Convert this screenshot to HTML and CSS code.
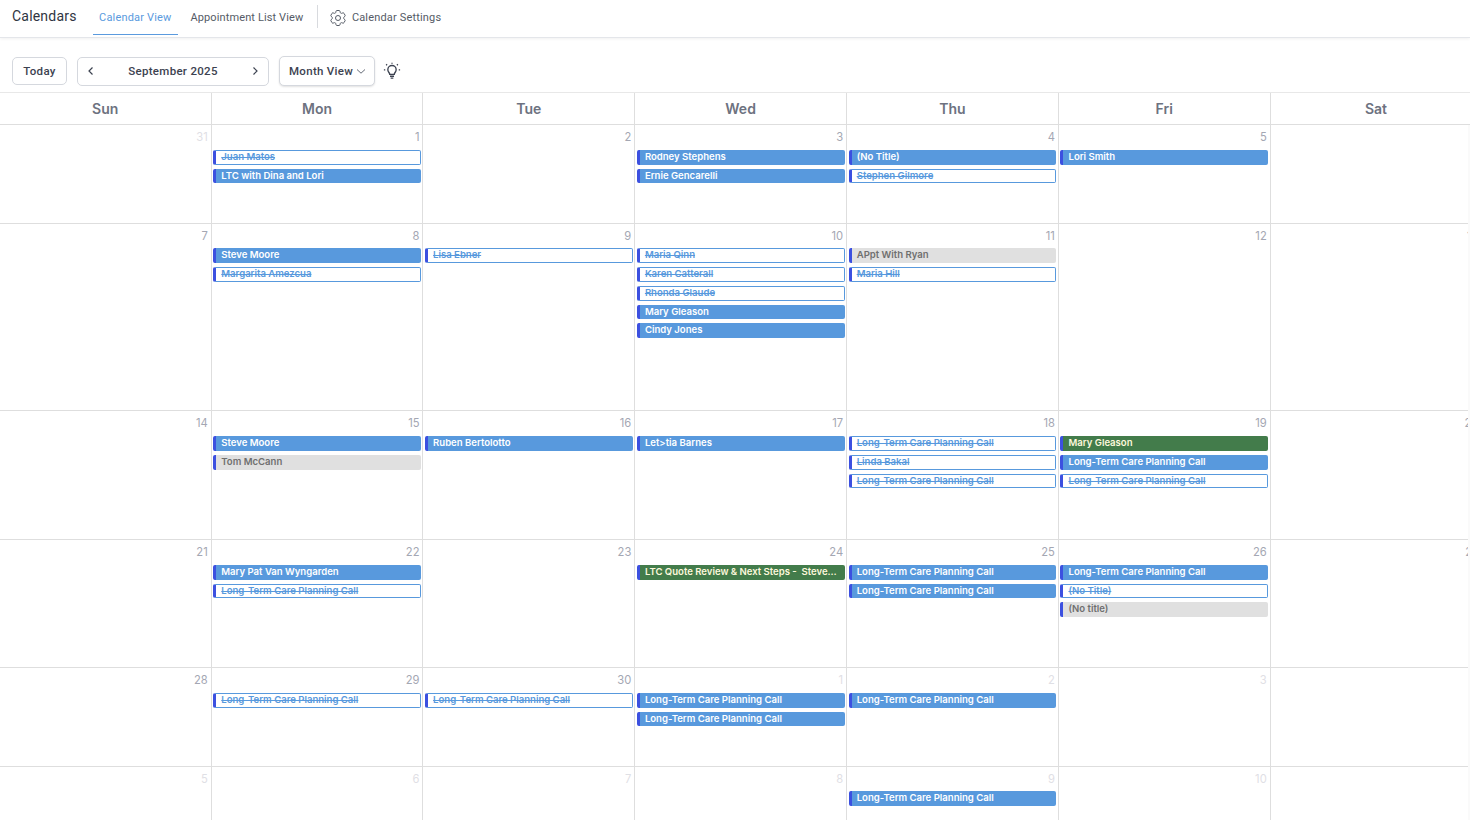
FILE: index.html
```html
<!DOCTYPE html>
<html lang="en">
<head>
  <meta charset="UTF-8" />
  <title>Calendars</title>
  <link rel="stylesheet" href="styles.css">
</head>
<body>

  <nav class="topbar">
    <h1 class="page-title">Calendars</h1>
    <a class="tab active">Calendar View</a>
    <a class="tab">Appointment List View</a>
    <span class="tab-divider"></span>
    <a class="tab settings">
      <svg viewBox="0 0 24 24" width="20" height="20" fill="none" stroke="#555b66" stroke-width="1.2" stroke-linejoin="round">
        <path d="M9.594 3.94c.09-.542.56-.94 1.11-.94h2.593c.55 0 1.02.398 1.11.94l.213 1.281c.063.374.313.686.645.87.074.04.147.083.22.127.325.196.72.257 1.075.124l1.217-.456a1.125 1.125 0 0 1 1.37.49l1.296 2.247a1.125 1.125 0 0 1-.26 1.431l-1.003.827c-.293.241-.438.613-.43.992a7.723 7.723 0 0 1 0 .255c-.008.378.137.75.43.991l1.004.827c.424.35.534.955.26 1.43l-1.298 2.247a1.125 1.125 0 0 1-1.369.491l-1.217-.456c-.355-.133-.75-.072-1.076.124a6.47 6.47 0 0 1-.22.128c-.331.183-.581.495-.644.869l-.213 1.281c-.09.543-.56.94-1.11.94h-2.594c-.55 0-1.019-.398-1.11-.94l-.213-1.281c-.062-.374-.312-.686-.644-.87a6.52 6.52 0 0 1-.22-.127c-.325-.196-.72-.257-1.076-.124l-1.217.456a1.125 1.125 0 0 1-1.369-.49l-1.297-2.247a1.125 1.125 0 0 1 .26-1.431l1.004-.827c.292-.24.437-.613.43-.991a6.932 6.932 0 0 1 0-.255c.007-.38-.138-.751-.43-.992l-1.004-.827a1.125 1.125 0 0 1-.26-1.43l1.297-2.247a1.125 1.125 0 0 1 1.37-.491l1.216.456c.356.133.751.072 1.076-.124.072-.044.146-.086.22-.128.332-.183.582-.495.644-.869l.214-1.28Z"/>
        <circle cx="12" cy="12" r="3"/>
      </svg>
      Calendar Settings
    </a>
  </nav>

  <div class="toolbar">
    <button class="btn today">Today</button>
    <div class="btn month-nav">
      <svg viewBox="0 0 10 10" width="10" height="10" fill="none" stroke="#3c4250" stroke-width="1.2"><path d="M6.5 1.5 3 5l3.5 3.5"/></svg>
      <span>September 2025</span>
      <svg viewBox="0 0 10 10" width="10" height="10" fill="none" stroke="#3c4250" stroke-width="1.2"><path d="M3.5 1.5 7 5 3.5 8.5"/></svg>
    </div>
    <button class="btn view-select">
      Month View
      <svg viewBox="0 0 10 10" width="10" height="10" fill="none" stroke="#666c78" stroke-width="1"><path d="M1 3.5 5 7.2l4-3.7"/></svg>
    </button>
    <svg class="bulb" viewBox="0 0 16 16" width="18" height="18" fill="none" stroke="#3c4250" stroke-width="1.2">
      <path d="M6 11c0-1.5-1.7-2-1.7-4.2a3.7 3.7 0 0 1 7.4 0C11.700 9 10 9.500 10 11z"/>
      <path d="M6.200 12.700h3.600M6.800 14.300h2.400"/>
      <path d="M8 .6v1M2.800 2l.8.800M13.200 2l-.8.800M.8 7h1.200M14 7h1.200"/>
    </svg>
  </div>

  <div class="calendar-head">
    <div class="dow">Sun</div><div class="dow">Mon</div><div class="dow">Tue</div><div class="dow">Wed</div><div class="dow">Thu</div><div class="dow">Fri</div><div class="dow">Sat</div>
  </div>

  <div class="calendar-scroll">
    <div class="calendar-body">
      <div class="day other"><div class="num">31</div></div>
      <div class="day"><div class="num">1</div>
        <div class="ev cancelled">Juan Matos</div>
        <div class="ev">LTC with Dina and Lori</div>
      </div>
      <div class="day"><div class="num">2</div></div>
      <div class="day"><div class="num">3</div>
        <div class="ev">Rodney Stephens</div>
        <div class="ev">Ernie Gencarelli</div>
      </div>
      <div class="day"><div class="num">4</div>
        <div class="ev">(No Title)</div>
        <div class="ev cancelled">Stephen Gilmore</div>
      </div>
      <div class="day"><div class="num">5</div>
        <div class="ev">Lori Smith</div>
      </div>
      <div class="day"><div class="num">6</div></div>

      <div class="day"><div class="num">7</div></div>
      <div class="day"><div class="num">8</div>
        <div class="ev">Steve Moore</div>
        <div class="ev cancelled">Margarita Amezcua</div>
      </div>
      <div class="day"><div class="num">9</div>
        <div class="ev cancelled">Lisa Ebner</div>
      </div>
      <div class="day"><div class="num">10</div>
        <div class="ev cancelled">Maria Qinn</div>
        <div class="ev cancelled">Karen Catterall</div>
        <div class="ev cancelled">Rhonda Glaude</div>
        <div class="ev">Mary Gleason</div>
        <div class="ev">Cindy Jones</div>
      </div>
      <div class="day"><div class="num">11</div>
        <div class="ev grey">APpt With Ryan</div>
        <div class="ev cancelled">Maria Hill</div>
      </div>
      <div class="day"><div class="num">12</div></div>
      <div class="day"><div class="num">13</div></div>

      <div class="day"><div class="num">14</div></div>
      <div class="day"><div class="num">15</div>
        <div class="ev">Steve Moore</div>
        <div class="ev grey">Tom McCann</div>
      </div>
      <div class="day"><div class="num">16</div>
        <div class="ev">Ruben Bertolotto</div>
      </div>
      <div class="day"><div class="num">17</div>
        <div class="ev">Let&gt;tia Barnes</div>
      </div>
      <div class="day"><div class="num">18</div>
        <div class="ev cancelled">Long-Term Care Planning Call</div>
        <div class="ev cancelled">Linda Bakal</div>
        <div class="ev cancelled">Long-Term Care Planning Call</div>
      </div>
      <div class="day"><div class="num">19</div>
        <div class="ev green">Mary Gleason</div>
        <div class="ev">Long-Term Care Planning Call</div>
        <div class="ev cancelled">Long-Term Care Planning Call</div>
      </div>
      <div class="day"><div class="num">20</div></div>

      <div class="day"><div class="num">21</div></div>
      <div class="day"><div class="num">22</div>
        <div class="ev">Mary Pat Van Wyngarden</div>
        <div class="ev cancelled">Long-Term Care Planning Call</div>
      </div>
      <div class="day"><div class="num">23</div></div>
      <div class="day"><div class="num">24</div>
        <div class="ev green">LTC Quote Review &amp; Next Steps -&nbsp; Steve Moore</div>
      </div>
      <div class="day"><div class="num">25</div>
        <div class="ev">Long-Term Care Planning Call</div>
        <div class="ev">Long-Term Care Planning Call</div>
      </div>
      <div class="day"><div class="num">26</div>
        <div class="ev">Long-Term Care Planning Call</div>
        <div class="ev cancelled">(No Title)</div>
        <div class="ev grey">(No title)</div>
      </div>
      <div class="day"><div class="num">27</div></div>

      <div class="day"><div class="num">28</div></div>
      <div class="day"><div class="num">29</div>
        <div class="ev cancelled">Long-Term Care Planning Call</div>
      </div>
      <div class="day"><div class="num">30</div>
        <div class="ev cancelled">Long-Term Care Planning Call</div>
      </div>
      <div class="day other"><div class="num">1</div>
        <div class="ev">Long-Term Care Planning Call</div>
        <div class="ev">Long-Term Care Planning Call</div>
      </div>
      <div class="day other"><div class="num">2</div>
        <div class="ev">Long-Term Care Planning Call</div>
      </div>
      <div class="day other"><div class="num">3</div></div>
      <div class="day other"><div class="num">4</div></div>

      <div class="day other"><div class="num">5</div></div>
      <div class="day other"><div class="num">6</div></div>
      <div class="day other"><div class="num">7</div></div>
      <div class="day other"><div class="num">8</div></div>
      <div class="day other"><div class="num">9</div>
        <div class="ev">Long-Term Care Planning Call</div>
      </div>
      <div class="day other"><div class="num">10</div></div>
      <div class="day other"><div class="num">11</div></div>
    </div>
  </div>

</body>
</html>
```

FILE: styles.css
```css
* { margin: 0; padding: 0; box-sizing: border-box; }
html, body { height: 100%; overflow: hidden; }
body {
  background: #fff;
  font-family: Roboto, sans-serif;
  color: #2f3542;
}

.topbar {
  display: flex;
  align-items: center;
  height: 38px;
  padding-left: 12px;
  border-bottom: 1px solid #e4e6ea;
  box-shadow: 0 1px 3px rgba(0,0,0,0.06);
}
.page-title {
  font-size: 14px;
  font-weight: 400;
  letter-spacing: 0.2px;
  margin-right: 16px;
  padding-bottom: 6px;
}
.tab {
  display: flex;
  align-items: center;
  height: 35px;
  margin-top: -3px;
  padding: 2px 6.5px 0;
  border-bottom: 1px solid transparent;
  font-size: 11px;
  letter-spacing: 0.12px;
  color: #555b66;
}
.tab.active {
  color: #5a9ade;
  border-bottom-color: #5a9ade;
  letter-spacing: 0.17px;
  margin-right: 6px;
}
.tab-divider {
  width: 1px;
  height: 23px;
  margin: -5px 6px 0 7px;
  background: #d8dade;
}
.settings { gap: 4px; padding-left: 4px; letter-spacing: 0.17px; }

.toolbar {
  display: flex;
  align-items: center;
  height: 54px;
  padding: 12px 0 0 12px;
}
.btn {
  display: flex;
  align-items: center;
  height: 29px;
  background: #fff;
  border: 1px solid #d5d8de;
  border-radius: 5px;
  font-family: Roboto, sans-serif;
  font-size: 11.5px;
  font-weight: 500;
  letter-spacing: 0.3px;
  color: #3c4250;
}
.today { justify-content: center; width: 55px; margin-right: 10px; height: 28px; }
.month-nav { justify-content: space-between; width: 192px; padding: 0 8px; margin-right: 10px; }
.view-select {
  gap: 3px;
  width: 96px;
  padding-left: 9px;
  margin-right: 8px;
  height: 30px;
  box-shadow: 0 1px 2px rgba(0,0,0,0.12);
}

.calendar-head, .calendar-body {
  display: grid;
  width: 1482.6px;
  margin-left: -0.2px;
  grid-template-columns: repeat(7, minmax(0, 1fr));
}
.calendar-head {
  height: 33px;
  border-top: 1px solid #e8e8e8;
}
.calendar-scroll {
  height: 695px;
  overflow: hidden;
  border-right: 2px solid #fafafa;
}
.calendar-body {
  grid-template-rows: 98.55px 187.8px 128.65px 128px 98.55px 99px;
}
.dow {
  display: flex;
  align-items: center;
  justify-content: center;
  border-right: 1px solid #dedede;
  border-bottom: 1px solid #dedede;
  font-family: Inter, sans-serif;
  font-size: 14px;
  font-weight: 600;
  color: #6d7280;
}
.day {
  padding: 0 1.4px 0 1.7px;
  border-right: 1px solid #dedede;
  border-bottom: 1px solid #dedede;
}
.num {
  height: 24.9px;
  padding: 6px 1.5px 0 0;
  text-align: right;
  font-family: Inter, sans-serif;
  font-size: 11.2px;
  line-height: 13px;
  color: #a4a7b3;
}
.other .num { color: #dfe0e5; }

.ev {
  height: 14.7px;
  margin-bottom: 4px;
  padding: 0 7px 0 5px;
  overflow: hidden;
  white-space: nowrap;
  text-overflow: ellipsis;
  background: #5899dd;
  border-left: 3px solid #3c50e0;
  border-radius: 2px;
  font-family: Inter, sans-serif;
  font-size: 9.55px;
  font-weight: 600;
  line-height: 13px;
  color: #fff;
}
.ev.cancelled {
  background: #fff;
  border: 1px solid #5899dd;
  border-left: 3px solid #3c50e0;
  line-height: 11.5px;
  color: #5899dd;
  text-decoration: line-through;
}
.ev.green { background: #437c4b; color: #fdf8dc; }
.ev.grey { background: #e0e0e0; color: #6f6f6f; }
```
